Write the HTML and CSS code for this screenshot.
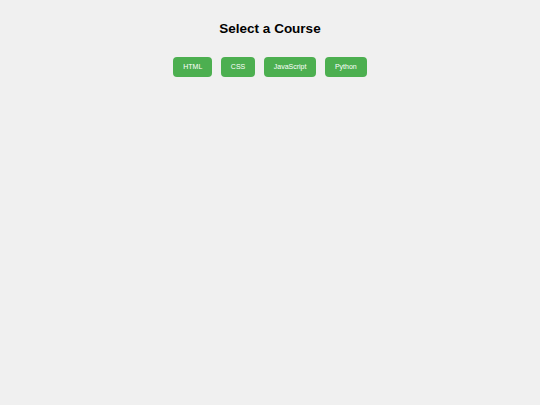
FILE: index.html
```html
<!DOCTYPE html>
<html lang="en">
<head>
<meta charset="utf-8">
<title>Select a Course</title>
<link rel="stylesheet" href="styles.css">
</head>
<body>
<main class="page">
  <h1 class="title">Select a Course</h1>
  <div class="courses">
    <button class="course">HTML</button>
    <button class="course">CSS</button>
    <button class="course">JavaScript</button>
    <button class="course">Python</button>
  </div>
</main>
</body>
</html>
```
FILE: styles.css
```css
html, body {
  margin: 0;
  padding: 0;
  background: #f0f0f0;
}
body {
  font-family: "Liberation Sans", Arial, sans-serif;
  color: #000;
}
.page {
  padding-top: 21px;
  display: flex;
  flex-direction: column;
  align-items: center;
}
.title {
  margin: 0;
  font-size: 13.5px;
  font-weight: bold;
  line-height: 15.5px;
}
.courses {
  margin-top: 20.5px;
  display: flex;
  gap: 8.5px;
  justify-content: center;
}
.course {
  height: 20px;
  padding: 0 10px;
  border: none;
  border-radius: 4px;
  background: #4caf50;
  color: #fff;
  font-family: "Liberation Sans", Arial, sans-serif;
  font-size: 7px;
  line-height: 20px;
  cursor: pointer;
}
```
